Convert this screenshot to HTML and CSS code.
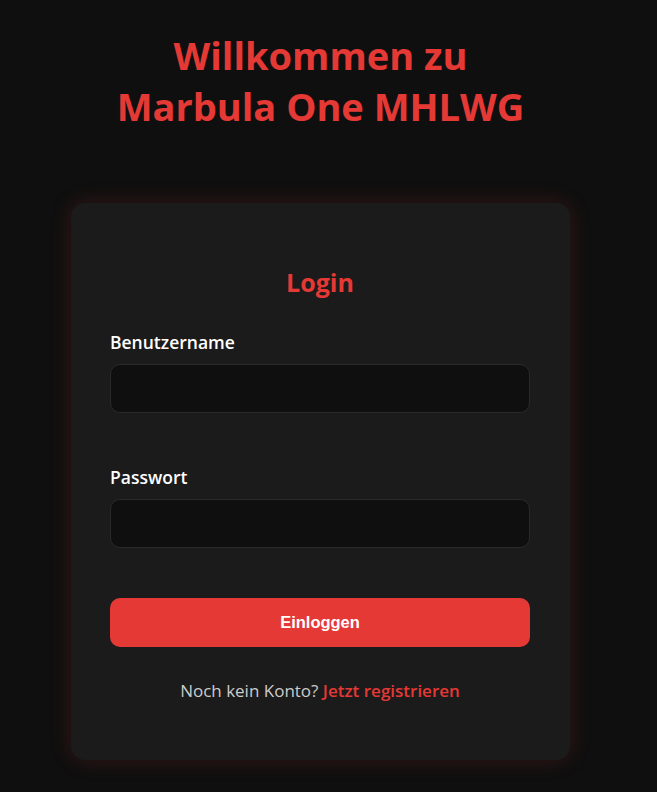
FILE: index.html
```html
<!DOCTYPE html>
<html lang="de">
<head>
<meta charset="utf-8">
<title>Marbula One MHLWG</title>
<link rel="stylesheet" href="styles.css">
</head>
<body>
<main class="page">
  <h1 class="title">Willkommen zu<br>Marbula One MHLWG</h1>
  <section class="card">
    <h2 class="card-title">Login</h2>
    <form class="form">
      <label class="field">
        <span class="label">Benutzername</span>
        <input class="input" type="text">
      </label>
      <label class="field">
        <span class="label">Passwort</span>
        <input class="input" type="password">
      </label>
      <button class="btn" type="button">Einloggen</button>
    </form>
    <p class="footer">Noch kein Konto? <a class="link" href="#">Jetzt registrieren</a></p>
  </section>
</main>
</body>
</html>
```

FILE: styles.css
```css
* { box-sizing: border-box; }
html, body { margin: 0; padding: 0; }
body {
  background: #0f0f0f;
  font-family: "Open Sans", "Noto Sans", sans-serif;
  color: #fff;
  height: 792px;
  overflow: hidden;
}
.page {
  width: 641px;
  display: flex;
  flex-direction: column;
  align-items: center;
  padding-top: 30px;
}
.title {
  margin: 0;
  color: #e53935;
  font-size: 38px;
  line-height: 51px;
  font-weight: 700;
  text-align: center;
}
.card {
  margin-top: 71px;
  width: 499px;
  height: 557px;
  background: #1b1b1b;
  border-radius: 14px;
  box-shadow: 0 0 22px rgba(229, 57, 53, 0.18);
  padding: 61px 40px 40px 39px;
}
.card-title {
  margin: 0 0 30px;
  text-align: center;
  color: #e53935;
  font-size: 25px;
  line-height: 36px;
  font-weight: 700;
}
.form { display: flex; flex-direction: column; }
.field { display: flex; flex-direction: column; }
.field + .field { margin-top: 52px; }
.label {
  font-size: 17.5px;
  font-weight: 600;
  line-height: 24px;
  margin-bottom: 10px;
}
.input {
  height: 49px;
  background: #0f0f0f;
  border: 1px solid #2a2a2a;
  border-radius: 10px;
  color: #fff;
  padding: 0 14px;
  font-size: 16px;
  outline: none;
}
.btn {
  margin-top: 50px;
  height: 49px;
  background: #e53935;
  border: none;
  border-radius: 10px;
  color: #fff;
  font-family: "Liberation Sans", Arial, sans-serif;
  font-size: 16.5px;
  font-weight: 700;
}
.footer {
  margin: 33px 0 0;
  text-align: center;
  color: #cccccc;
  font-size: 17px;
  line-height: 22px;
}
.link {
  color: #e53935;
  font-weight: 600;
  text-decoration: none;
}
```
